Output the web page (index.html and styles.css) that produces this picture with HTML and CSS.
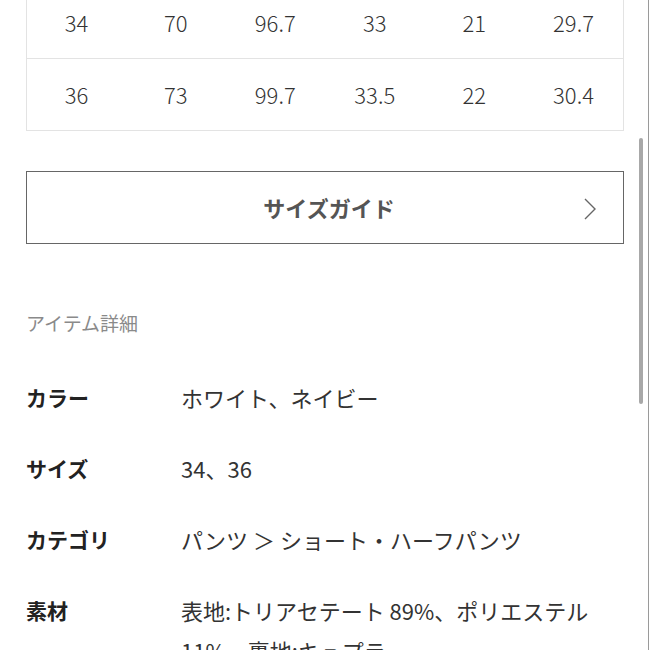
FILE: index.html
```html
<!DOCTYPE html>
<html lang="ja">
<head>
  <meta charset="UTF-8" />
  <meta name="viewport" content="width=device-width, initial-scale=1.0"/>
  <title>アイテム詳細</title>
  <link rel="stylesheet" href="styles.css">
</head>
<body>

  <div class="page">
    <table class="size-table">
      <tr>
        <td>34</td><td>70</td><td>96.7</td><td>33</td><td>21</td><td>29.7</td>
      </tr>
      <tr>
        <td>36</td><td>73</td><td>99.7</td><td>33.5</td><td>22</td><td>30.4</td>
      </tr>
    </table>

    <a class="guide-btn" href="#">
      <span>サイズガイド</span>
      <svg class="chevron" width="14" height="24" viewBox="0 0 14 24">
        <path d="M2 2 L12 12 L2 22" fill="none" stroke="#666" stroke-width="1.4"/>
      </svg>
    </a>

    <h2 class="section-title">アイテム詳細</h2>

    <dl class="details">
      <dt>カラー</dt>
      <dd>ホワイト、ネイビー</dd>
      <dt>サイズ</dt>
      <dd>34、36</dd>
      <dt>カテゴリ</dt>
      <dd>パンツ ＞ ショート・ハーフパンツ</dd>
      <dt>素材</dt>
      <dd>表地:トリアセテート 89%、ポリエステル 11%、裏地:キュプラ</dd>
    </dl>
  </div>

  <div class="scrollbar"></div>
  <div class="edge"></div>

</body>
</html>
```

FILE: styles.css
```css
:root {
  --text-color: #2b2b2b;
  --muted: #8a8a8a;
  --line: #e3e3e3;
}

* {
  box-sizing: border-box;
  margin: 0;
  padding: 0;
}

body {
  font-family: "Noto Sans CJK JP", "Liberation Sans", sans-serif;
  background: #fff;
  color: var(--text-color);
  overflow: hidden;
}

.page {
  padding: 0 26px;
}

.size-table {
  width: 100%;
  margin-top: -14px;
  border-collapse: collapse;
  table-layout: fixed;
  border: 1px solid var(--line);
  border-top: none;
}

.size-table tr {
  border-bottom: 1px solid var(--line);
}

.size-table td {
  height: 72px;
  text-align: center;
  font-size: 22px;
  font-weight: 300;
  color: #333;
}

.guide-btn {
  display: flex;
  align-items: center;
  justify-content: center;
  position: relative;
  height: 73px;
  margin-top: 40px;
  border: 1px solid #666;
  text-decoration: none;
  color: #555;
  font-size: 22px;
  font-weight: 700;
}

.guide-btn span {
  margin-left: 8px;
}

.chevron {
  position: absolute;
  right: 26px;
  top: 25px;
}

.section-title {
  margin-top: 66px;
  font-size: 19px;
  font-weight: 400;
  line-height: 26px;
  color: var(--muted);
}

.details {
  display: grid;
  grid-template-columns: 155px 1fr;
  row-gap: 31px;
  margin-top: 41px;
  font-size: 22px;
  line-height: 40px;
}

.details dt {
  font-size: 21px;
  font-weight: 700;
  color: #222;
}

.details dd {
  color: #333;
}

.scrollbar {
  position: fixed;
  right: 7px;
  top: 138px;
  width: 4px;
  height: 266px;
  border-radius: 2px;
  background: #a8a8a8;
}

.edge {
  position: fixed;
  right: 1px;
  top: 0;
  bottom: 0;
  width: 1px;
  background: #9a9a9a;
}
```
